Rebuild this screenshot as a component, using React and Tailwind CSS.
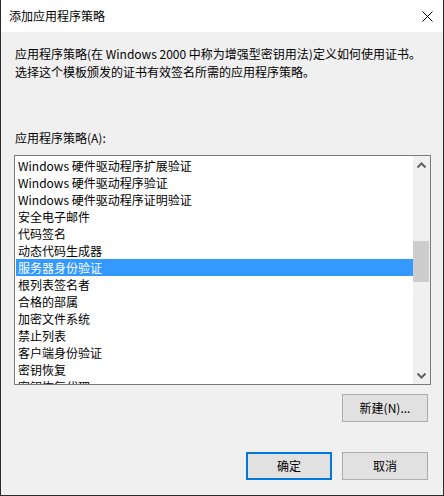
const items = [
  "Windows 硬件驱动程序扩展验证",
  "Windows 硬件驱动程序验证",
  "Windows 硬件驱动程序证明验证",
  "安全电子邮件",
  "代码签名",
  "动态代码生成器",
  "服务器身份验证",
  "根列表签名者",
  "合格的部属",
  "加密文件系统",
  "禁止列表",
  "客户端身份验证",
  "密钥恢复",
  "密钥恢复代理",
];

const font = { fontFamily: '"Noto Sans CJK SC", "Noto Sans", sans-serif' };

function Chevron({ down }) {
  return (
    <svg width="9" height="6" viewBox="0 0 9 6" className={down ? "rotate-180" : ""}>
      <path d="M0.5 5.5 L4.5 1.5 L8.5 5.5" fill="none" stroke="#606060" strokeWidth="2" />
    </svg>
  );
}

function WinButton({ label, primary }) {
  return (
    <button
      type="button"
      className={
        "flex h-[28px] w-[86px] items-center justify-center bg-[#e1e1e1] text-[12px] leading-none text-black " +
        (primary ? "border-2 border-[#0078d7]" : "border border-[#adadad]")
      }
    >
      {label}
    </button>
  );
}

export default function App() {
  const selected = 6;

  return (
    <div className="flex h-[496px] w-[444px] flex-col border-x border-b border-[#2b2b2b] bg-[#f0f0f0] text-black" style={font}>
      {/* 标题栏 */}
      <div className="flex h-[32px] shrink-0 items-center justify-between bg-white pl-[8px] pr-[10px]">
        <span className="text-[12px] leading-none">添加应用程序策略</span>
        <svg width="11" height="11" viewBox="0 0 11 11">
          <path d="M0.5 0.5 L10.5 10.5 M10.5 0.5 L0.5 10.5" stroke="#000" strokeWidth="1" />
        </svg>
      </div>

      <div className="flex flex-1 flex-col pl-[13px] pr-[14px]">
        <p className="pl-[1px] pt-[13px] text-[12px] leading-[18px]">
          应用程序策略(在 Windows 2000 中称为增强型密钥用法)定义如何使用证书。
          <br />
          选择这个模板颁发的证书有效签名所需的应用程序策略。
        </p>

        <p className="mt-[48px] pl-[1px] text-[12px] leading-[18px]">应用程序策略(A):</p>

        {/* 列表框 */}
        <div className="mt-[8px] flex h-[230px] w-[417px] border border-[#7a7a7a] bg-white">
          <div className="min-w-0 flex-1 overflow-hidden pl-[1px] pt-[1px]">
            {items.map((item, i) => (
              <div
                key={item}
                className={
                  "h-[17px] whitespace-nowrap pl-[2px] text-[12px] leading-[17px] " +
                  (i === selected ? "bg-[#3399ff] text-white" : "text-black")
                }
              >
                {item}
              </div>
            ))}
          </div>
          <div className="flex w-[17px] shrink-0 flex-col bg-[#f0f0f0]">
            <div className="flex h-[17px] items-center justify-center">
              <Chevron />
            </div>
            <div className="flex-1 pt-[68px]">
              <div className="h-[41px] w-[16px] bg-[#cdcdcd]" />
            </div>
            <div className="flex h-[17px] items-center justify-center">
              <Chevron down />
            </div>
          </div>
        </div>

        <div className="mt-[9px] flex justify-end pr-[1px]">
          <WinButton label="新建(N)..." />
        </div>

        <div className="mt-[30px] flex justify-end gap-[10px] pr-[1px]">
          <WinButton label="确定" primary />
          <WinButton label="取消" />
        </div>
      </div>
    </div>
  );
}
